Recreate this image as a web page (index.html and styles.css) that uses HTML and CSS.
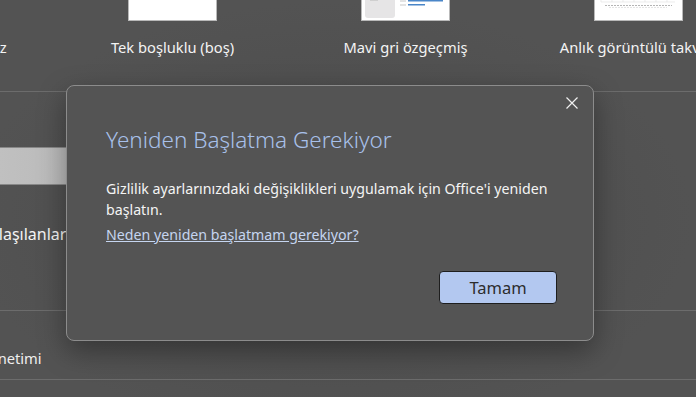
FILE: index.html
```html
<!DOCTYPE html>
<html lang="tr">
<head>
    <meta charset="UTF-8">
    <meta name="viewport" content="width=device-width, initial-scale=1.0">
    <title>Yeniden Başlatma Gerekiyor</title>
    <link rel="stylesheet" href="styles.css">
</head>
<body>
    <div class="backstage">
        <!-- Template gallery -->
        <div class="templates">
            <div class="tile">
                <div class="thumb"></div>
                <div class="tile-name">Word'e hoş geldiniz</div>
            </div>
            <div class="tile">
                <div class="thumb"></div>
                <div class="tile-name">Tek boşluklu (boş)</div>
            </div>
            <div class="tile">
                <div class="thumb thumb-resume">
                    <svg width="87" height="20" viewBox="0 0 87 20">
                        <rect x="3" y="-10" width="30" height="28" rx="3" fill="#e6e5e6"/>
                        <rect x="46" y="0" width="35" height="1.5" fill="#4a86c8"/>
                        <rect x="38" y="0.5" width="6" height="1" fill="#c8c8c8"/>
                        <rect x="46" y="4" width="17" height="1.5" fill="#4a86c8"/>
                        <rect x="38" y="4.5" width="6" height="1" fill="#c8c8c8"/>
                        <rect x="8" y="0" width="8" height="1" fill="#cfcfcf"/>
                    </svg>
                </div>
                <div class="tile-name">Mavi gri özgeçmiş</div>
            </div>
            <div class="tile">
                <div class="thumb thumb-calendar">
                    <svg width="87" height="20" viewBox="0 0 87 20">
                        <g stroke="#e4e4e4" stroke-width="0.7">
                            <line x1="6" y1="2" x2="80" y2="2"/>
                            <line x1="6" y1="0" x2="6" y2="2"/>
                            <line x1="17" y1="0" x2="17" y2="2"/>
                            <line x1="28" y1="0" x2="28" y2="2"/>
                            <line x1="39" y1="0" x2="39" y2="2"/>
                            <line x1="50" y1="0" x2="50" y2="2"/>
                            <line x1="61" y1="0" x2="61" y2="2"/>
                            <line x1="72" y1="0" x2="72" y2="2"/>
                        </g>
                        <line x1="10" y1="5.5" x2="77" y2="5.5" stroke="#b5b5b5" stroke-width="1" stroke-dasharray="2 1"/>
                        <line x1="14" y1="7.5" x2="72" y2="7.5" stroke="#d8d8d8" stroke-width="0.7" stroke-dasharray="2 1"/>
                    </svg>
                </div>
                <div class="tile-name">Anlık görüntülü takvim</div>
            </div>
        </div>

        <div class="divider"></div>

        <div class="search-bar"></div>

        <div class="section-title">Paylaşılanlar</div>

        <div class="divider divider-low"></div>

        <div class="menu-item">Hesap yönetimi</div>

        <div class="divider"></div>
    </div>

    <!-- Restart dialog -->
    <div class="dialog" role="dialog" aria-labelledby="dialogTitle">
        <button class="close-btn" aria-label="Kapat">
            <svg width="14" height="14" viewBox="0 0 14 14">
                <path d="M1.5 1.5 L12.5 12.5 M12.5 1.5 L1.5 12.5" stroke="#f0f0f0" stroke-width="1.2" fill="none"/>
            </svg>
        </button>
        <h1 id="dialogTitle" class="dialog-title">Yeniden Başlatma Gerekiyor</h1>
        <p class="dialog-text">Gizlilik ayarlarınızdaki değişiklikleri uygulamak için Office'i yeniden başlatın.</p>
        <a href="#" class="dialog-link">Neden yeniden başlatmam gerekiyor?</a>
        <div class="dialog-actions">
            <button class="btn">Tamam</button>
        </div>
    </div>
</body>
</html>
```

FILE: styles.css
```css
/* General Styles */
body {
    margin: 0;
    padding: 0;
    width: 696px;
    height: 397px;
    overflow: hidden;
    font-family: 'Noto Sans', 'Open Sans', sans-serif;
    background-color: #535353;
    color: #f2f2f2;
    position: relative;
}

.backstage {
    height: 397px;
    overflow: hidden;
    background: radial-gradient(ellipse at 330px 220px, #4a4a4a 0%, #535353 70%);
}

/* Template gallery */
.templates {
    display: flex;
    margin-left: -177px;
    height: 91px;
}

.tile {
    flex: 0 0 233px;
    display: flex;
    flex-direction: column;
    align-items: center;
}

.thumb {
    width: 87px;
    height: 20px;
    background-color: #fff;
    border: 1px solid #b9b9b9;
    border-top: none;
}

.thumb svg {
    display: block;
}

.tile-name {
    margin-top: 16px;
    font-size: 14.7px;
    line-height: 20px;
    white-space: nowrap;
    color: #f4f4f4;
}

.divider {
    height: 1px;
    background-color: #6c6c6c;
}

.search-bar {
    margin-top: 55px;
    height: 36px;
    width: 120px;
    background: linear-gradient(90deg, #c0c0c0, #b6b6b6);
    border-top: 1px solid #888;
    border-bottom: 1px solid #888;
}

.section-title {
    margin-top: 38px;
    margin-left: -28px;
    font-size: 16px;
    line-height: 22px;
    color: #f4f4f4;
}

.divider-low {
    margin-top: 65px;
}

.menu-item {
    margin-left: -66px;
    padding: 37px 0 11px;
    font-size: 14.7px;
    line-height: 20px;
    color: #efefef;
}

/* Dialog */
.dialog {
    position: absolute;
    left: 66px;
    top: 85px;
    width: 526px;
    height: 254px;
    box-sizing: content-box;
    background-color: #545454;
    border: 1px solid #8c8c8c;
    border-radius: 8px;
    box-shadow: 0 10px 28px rgba(0, 0, 0, 0.35);
    display: flex;
    flex-direction: column;
    padding: 0;
}

.close-btn {
    position: absolute;
    top: 10px;
    right: 14px;
    width: 14px;
    height: 14px;
    padding: 0;
    border: none;
    background: none;
    cursor: pointer;
}

.close-btn svg {
    display: block;
}

.dialog-title {
    margin: 39px 0 0 39px;
    font-size: 22.5px;
    line-height: 30px;
    font-weight: 300;
    color: #a8c0ea;
}

.dialog-text {
    margin: 23px 28px 0 39px;
    font-size: 14.2px;
    line-height: 21px;
    color: #f4f4f4;
}

.dialog-link {
    margin: 4px 0 0 39px;
    font-size: 14.2px;
    line-height: 21px;
    color: #c5d5f0;
    text-decoration: underline;
    align-self: flex-start;
}

.dialog-actions {
    margin-top: auto;
    display: flex;
    justify-content: flex-end;
    padding: 0 36px 36px 0;
}

.btn {
    width: 118px;
    height: 33px;
    background-color: #b3c8f0;
    color: #2c2c2c;
    border: 1px solid #1e1e1e;
    border-radius: 4px;
    font-family: inherit;
    font-size: 16.5px;
    cursor: pointer;
}
```
